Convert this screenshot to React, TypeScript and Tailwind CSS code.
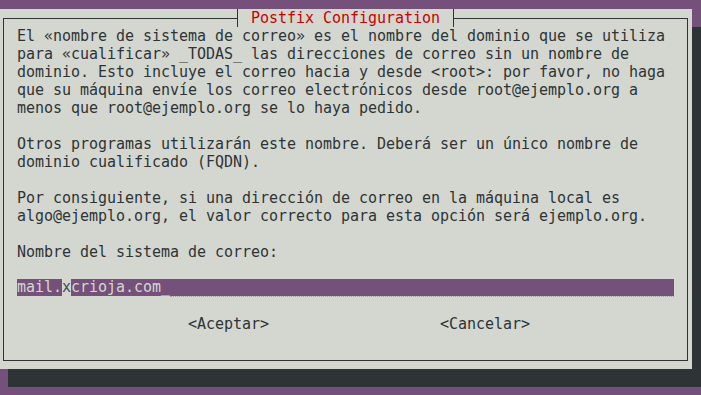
import React from 'react';

const mono = "font-['DejaVu_Sans_Mono','Liberation_Mono',monospace] text-[15px] leading-[18px] tracking-[-0.03px]";

const paragraphs: string[][] = [
  [
    'El «nombre de sistema de correo» es el nombre del dominio que se utiliza',
    'para «cualificar» _TODAS_ las direcciones de correo sin un nombre de',
    'dominio. Esto incluye el correo hacia y desde <root>: por favor, no haga',
    'que su máquina envíe los correo electrónicos desde root@ejemplo.org a',
    'menos que root@ejemplo.org se lo haya pedido.',
  ],
  [
    'Otros programas utilizarán este nombre. Deberá ser un único nombre de',
    'dominio cualificado (FQDN).',
  ],
  [
    'Por consiguiente, si una dirección de correo en la máquina local es',
    'algo@ejemplo.org, el valor correcto para esta opción será ejemplo.org.',
  ],
  ['Nombre del sistema de correo:'],
];

const Line: React.FC<{ children?: React.ReactNode }> = ({ children }) => (
  <div className="h-[18px] whitespace-pre">{children}</div>
);

const InputField: React.FC = () => (
  <div className="flex h-[18px] w-[657px] items-start">
    <span className="h-[17px] bg-[#75507b] text-[#d3d7cf] leading-[17px] whitespace-pre">mail.</span>
    <span className="h-[17px] bg-[#d3d7cf] text-[#4c4a55] leading-[17px]">x</span>
    <span className="h-[17px] bg-[#75507b] text-[#d3d7cf] leading-[17px] whitespace-pre">crioja.com_</span>
    <div className="h-[18px] flex-1 bg-[#75507b] bg-clip-padding border-b border-dotted border-[#b898ad]" />
  </div>
);

export default function App() {
  return (
    <div className={`w-[701px] h-[395px] overflow-hidden bg-[#75507b] pt-[9px] ${mono}`}>
      <div className="-ml-px w-[693px] h-[360px] bg-[#d3d7cf] text-[#2e3436] shadow-[9px_18px_0_#2e3436]">
        {/* top border with title */}
        <div className="flex h-[18px] px-[4px]">
          <div className="w-[234px] h-[9px] self-end border-t border-l border-[#2e3436]" />
          <div className="w-px h-[18px] bg-[#2e3436]" />
          <div className="w-[215px] pl-[13px] text-[#cc0000] whitespace-pre">Postfix Configuration</div>
          <div className="w-px h-[18px] bg-[#2e3436]" />
          <div className="flex-1 h-[9px] self-end border-t border-r border-[#2e3436]" />
        </div>

        {/* frame body */}
        <div className="mx-[4px] h-[334px] border-x border-b border-[#2e3436] pl-[13px] pb-[9px]">
          {paragraphs.map((p, i) => (
            <React.Fragment key={i}>
              {i > 0 && <Line />}
              {p.map((l, j) => (
                <Line key={j}>{l}</Line>
              ))}
            </React.Fragment>
          ))}
          <Line />
          <InputField />
          <Line />
          <div className="flex h-[18px] gap-[171px] pl-[171px] whitespace-pre">
            <span>&lt;Aceptar&gt;</span>
            <span>&lt;Cancelar&gt;</span>
          </div>
        </div>
      </div>
    </div>
  );
}
